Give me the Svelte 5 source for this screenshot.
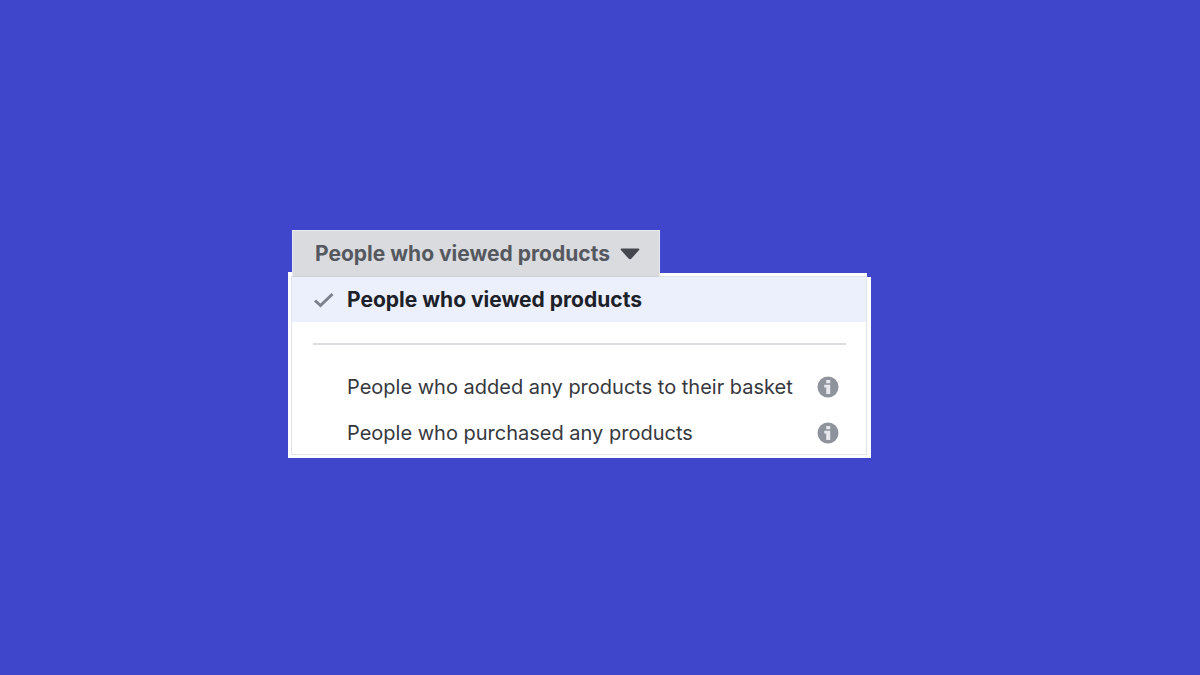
<script>
  const choices = [
    { id: 'basket', label: 'People who added any products to their basket' },
    { id: 'purchased', label: 'People who purchased any products' }
  ];
  const current = 'People who viewed products';
</script>

<main>
  <div class="picker">
    <button class="trigger" type="button" aria-haspopup="true" aria-expanded="true">
      <span>{current}</span>
      <svg class="caret" viewBox="0 0 20 12" aria-hidden="true">
        <path d="M2 .5h16c1.300 0 1.700 1 .9 1.800l-7.400 8.200c-.9 1-2.100 1-3 0L1.100 2.300C.3 1.500.7.5 2 .5z" />
      </svg>
    </button>
    <div class="frame">
      <div class="menu">
        <button class="option selected" type="button" aria-pressed="true">
          <svg class="check" viewBox="0 0 22 18" aria-hidden="true">
            <path d="M2 9.500l5.500 5L19.500 3" />
          </svg>
          <span>{current}</span>
        </button>
        <hr />
        {#each choices as choice (choice.id)}
          <button class="option" type="button">
            <span>{choice.label}</span>
            <svg class="info" viewBox="0 0 22 22" aria-hidden="true">
              <circle cx="11" cy="11" r="10.500" />
              <path d="M9.200 4h4v3.300h-4zM7.200 8.700h6v9.300h-4v-6.600h-2z" />
            </svg>
          </button>
        {/each}
      </div>
    </div>
  </div>
</main>

<style>
  :global(body) {
    background: #3f46cb;
  }

  main {
    box-sizing: border-box;
    min-height: 100vh;
    padding: 230px 24px 24px 24%;
    font-family: Inter, 'Liberation Sans', sans-serif;
  }

  .picker {
    display: flex;
    flex-direction: column;
    align-items: flex-start;
    max-width: 583px;
  }

  button {
    margin: 0;
    border: 0;
    font: inherit;
    font-size: 20px;
    line-height: 24px;
    text-align: left;
    white-space: nowrap;
    cursor: pointer;
  }

  .trigger {
    position: relative;
    z-index: 1;
    display: flex;
    align-items: center;
    gap: 10px;
    margin: 0 0 -5px 4px;
    padding: 11px 19px 10px 22px;
    border: 1px solid #e9eaf3;
    border-bottom-color: #d0d1d6;
    background: #dadbdf;
    color: #55585e;
    font-size: 21px;
    font-weight: 700;
  }

  .caret {
    width: 20px;
    height: 12px;
    fill: #44474e;
  }

  .frame {
    box-sizing: border-box;
    width: 100%;
    padding: 4px 4px 3px 3px;
    background: #fff;
    clip-path: polygon(0 0, 4px 0, 4px 1px, calc(100% - 4px) 1px, calc(100% - 4px) 5px, 100% 5px, 100% 100%, 0 100%);
  }

  .menu {
    display: flex;
    flex-direction: column;
    border: 1px solid #e2e3e9;
    background: #fff;
  }

  .option {
    display: flex;
    align-items: center;
    justify-content: space-between;
    padding: 11px 27px 11px 55px;
    background: transparent;
    color: #36383d;
  }

  .option:last-child {
    padding-bottom: 9px;
  }

  .option.selected {
    justify-content: flex-start;
    gap: 12px;
    padding: 11px 21px 10px;
    background: #ecf0fd;
    color: #1d2129;
    font-size: 21px;
    font-weight: 700;
  }

  .check {
    width: 22px;
    height: 18px;
    fill: none;
    stroke: #7d818b;
    stroke-width: 3;
  }

  .info {
    flex: none;
    width: 22px;
    height: 22px;
    fill: #8f939b;
  }

  .info path {
    fill: #e6e8ed;
  }

  hr {
    height: 2px;
    margin: 21px 20px 19px 21px;
    border: 0;
    background: #dcdde0;
  }
</style>
